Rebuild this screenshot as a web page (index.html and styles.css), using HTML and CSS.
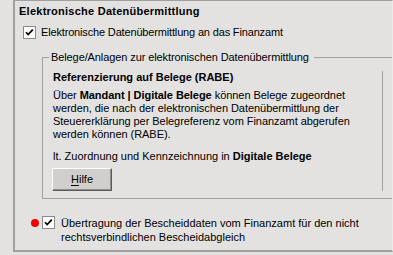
FILE: index.html
```html
<!DOCTYPE html>
<html lang="de">
<head>
<meta charset="utf-8">
<link rel="stylesheet" href="styles.css">
</head>
<body>
<div class="panel">
  <div class="title">Elektronische Datenübermittlung</div>
  <div class="check-row row1">
    <span class="cb"><svg width="11" height="11" viewBox="0 0 11 11"><path d="M2 5.2 L4.2 7.6 L8.8 2.6" fill="none" stroke="#000" stroke-width="1.7"/></svg></span>
    <span class="label">Elektronische Datenübermittlung an das Finanzamt</span>
  </div>
  <fieldset class="group">
    <legend>Belege/Anlagen zur elektronischen Datenübermittlung</legend>
    <div class="info">
      <div class="info-title">Referenzierung auf Belege (RABE)</div>
      <p class="info-text">Über <b>Mandant | Digitale Belege</b> können Belege zugeordnet<br>werden, die nach der elektronischen Datenübermittlung der<br>Steuererklärung per Belegreferenz vom Finanzamt abgerufen<br>werden können (RABE).</p>
      <p class="info-note">lt. Zuordnung und Kennzeichnung in <b>Digitale Belege</b></p>
      <button class="btn" type="button"><u>H</u>ilfe</button>
    </div>
  </fieldset>
  <div class="check-row row2">
    <span class="dot"></span>
    <span class="cb"><svg width="11" height="11" viewBox="0 0 11 11"><path d="M2 5.2 L4.2 7.6 L8.8 2.6" fill="none" stroke="#000" stroke-width="1.7"/></svg></span>
    <span class="label">Übertragung der Bescheiddaten vom Finanzamt für den nicht<br>rechtsverbindlichen Bescheidabgleich</span>
  </div>
</div>
</body>
</html>
```

FILE: styles.css
```css
html, body {
  margin: 0;
  padding: 0;
  background: #e3e2e0;
  overflow: hidden;
}
body {
  width: 393px;
  height: 255px;
  font-family: "Liberation Sans", Arial, sans-serif;
  font-size: 11px;
  line-height: 13px;
  color: #000;
}
.panel {
  box-sizing: border-box;
  margin-left: 13px;
  width: 380px;
  height: 252px;
  border-left: 2px solid #a0a0a0;
  border-top: 1px solid #a0a0a0;
  border-bottom: 2px solid #a0a0a0;
  border-right: 1px solid #ecebea;
  padding: 4px 0 0 4px;
}
.title {
  font-weight: bold;
  height: 13px;
  letter-spacing: 0.25px;
}
.check-row {
  display: flex;
  align-items: flex-start;
}
.row1 {
  margin-top: 8px;
  margin-left: 4px;
}
.cb {
  box-sizing: border-box;
  flex: none;
  width: 13px;
  height: 13px;
  background: #fff;
  border: 1px solid #8a8a8a;
  display: flex;
}
.row1 .label {
  margin-left: 5px;
  letter-spacing: -0.16px;
}
.group {
  margin: 12px 0 0 23px;
  padding: 0 0 7px 0;
  border: 1px solid #a0a0a0;
  border-right: none;
  min-width: 0;
}
.group legend {
  margin-left: 6px;
  padding: 0 5px 0 2px;
  line-height: 13px;
  letter-spacing: -0.1px;
}
.info {
  margin-top: 7px;
  padding-left: 10px;
  width: 329px;
  border-right: 1px solid #a0a0a0;
}
.info-title {
  font-weight: bold;
}
.info-text {
  margin: 5px 0 0;
  letter-spacing: -0.05px;
}
.info-note {
  margin: 9px 0 0;
}
.btn {
  display: block;
  box-sizing: border-box;
  margin: 5px 0 0 -1px;
  width: 60px;
  height: 23px;
  padding: 0;
  font: inherit;
  color: #000;
  background: #d1cfcc;
  border: 1px solid;
  border-color: #fff #5a5a5a #5a5a5a #fff;
  box-shadow: inset -1px -1px 0 #8e8e8e;
}
.btn u {
  text-decoration-thickness: 1px;
  text-underline-offset: 2px;
}
.row2 {
  margin-top: 17px;
  margin-left: 12px;
  line-height: 14px;
  align-items: center;
}
.row2 .cb {
  align-self: flex-start;
}
.dot {
  width: 8px;
  height: 8px;
  border-radius: 50%;
  background: #f00000;
  margin-right: 3px;
  align-self: flex-start;
  margin-top: 3px;
}
.row2 .label {
  margin-left: 6px;
}
```
